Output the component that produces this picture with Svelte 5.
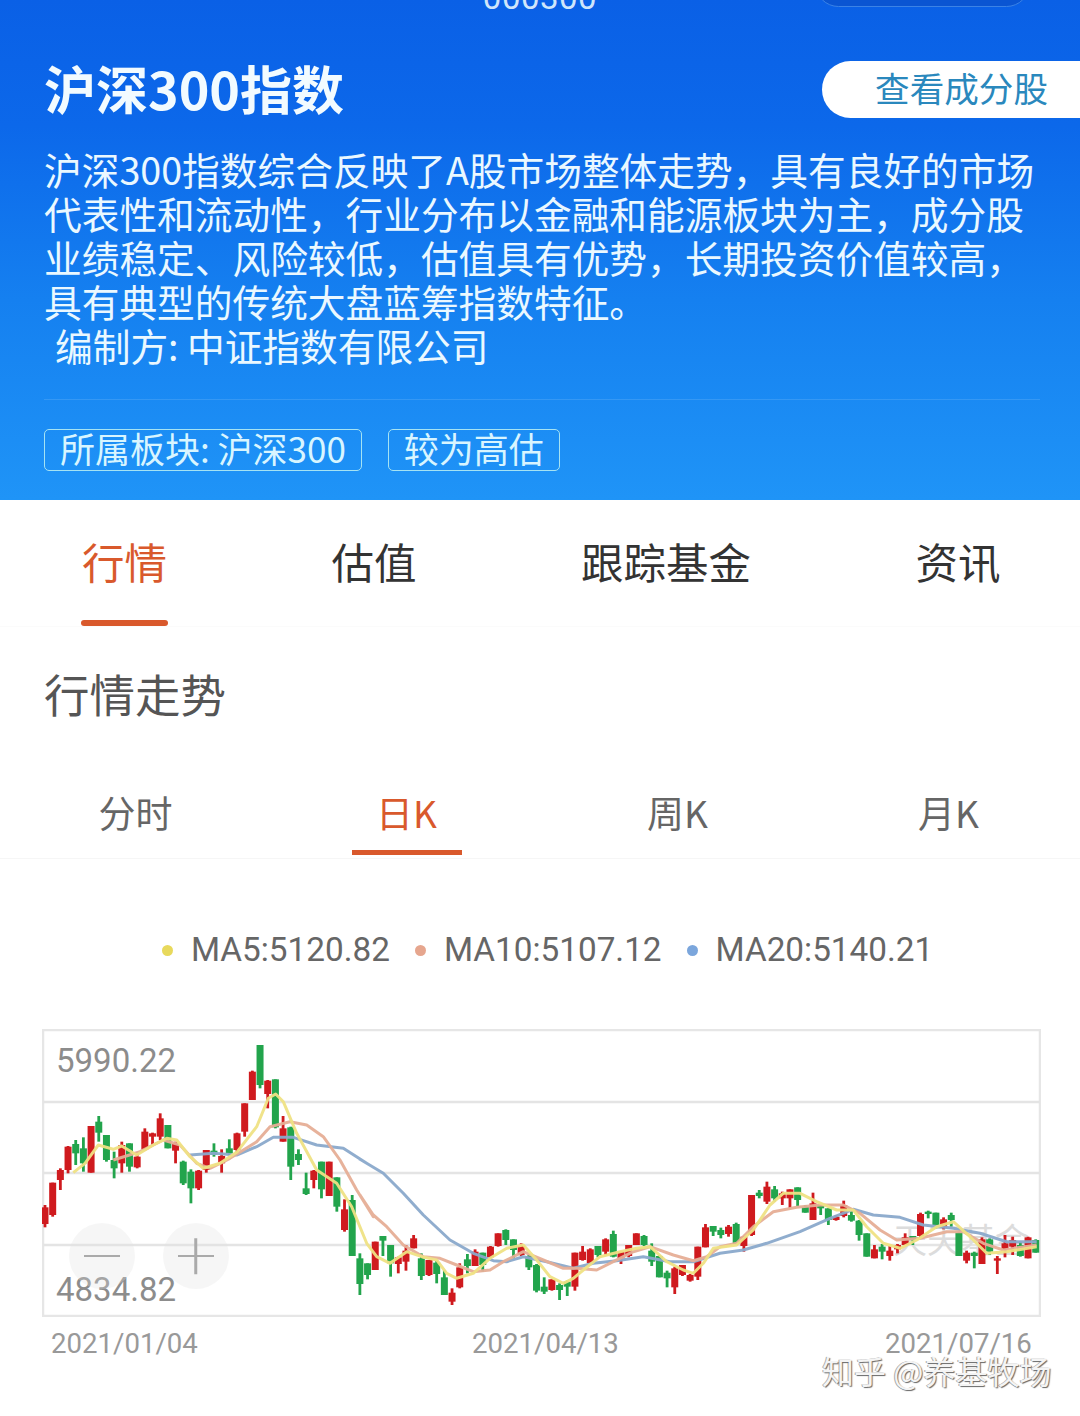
<script>
  const tabs = ['行情', '估值', '跟踪基金', '资讯'];
  const periods = ['分时', '日K', '周K', '月K'];
  const legend = [
    { color: '#e8d95c', text: 'MA5:5120.82' },
    { color: '#e6a68e', text: 'MA10:5107.12' },
    { color: '#7ba6dc', text: 'MA20:5140.21' }
  ];

  // candles: up?, wick top, body top, body bottom, wick bottom
  // values are in thirds of a pixel, measured from the base y of their group
  const first = [
    [1,555,562,612,622],[1,488,488,585,590],[1,445,450,480,510],[1,378,380,450,460],[0,360,372,400,435],
    [0,352,385,430,455],[1,318,318,458,458],[0,288,305,338,365],[0,345,345,420,425],[0,395,420,445,475],
    [1,365,375,430,458],[0,370,370,440,455],[1,398,410,442,445],[1,325,335,388,392],[1,338,340,350,375],
    [1,280,295,350,360],[0,315,315,385,385],[1,365,370,392,430],[0,422,425,490,495],[0,448,455,505,550],
    [1,450,452,505,510],[1,390,390,450,458],[0,370,392,405,410],[1,388,408,430,458],[0,358,385,400,405],
    [1,338,340,390,405],[1,250,250,335,350],[1,152,155,240,240],[0,75,75,195,205],[1,180,182,222,265],
    [0,178,178,322,325],[1,288,325,365,365],[0,320,322,440,480],[0,388,402,420,435],[0,458,505,522,525],
    [1,450,452,480,505],[0,425,425,508,535],[1,425,425,528,528],[0,472,472,560,575],[1,538,568,630,635],
    [0,525,540,708,708],[0,700,715,792,825],[0,730,730,765,778],[1,665,665,750,750]
  ];
  const second = [
    [0,318,318,332,378],[0,345,345,400,440],[1,380,382,402,430],[1,345,362,395,422],[1,315,325,355,355],
    [0,370,385,438,450],[1,390,390,435,438],[0,392,398,432,460],[0,420,442,495,495],[1,475,488,515,525],
    [1,400,412,472,475],[0,372,388,408,430],[1,358,365,408,408],[0,368,368,405,425],[1,348,350,382,385],
    [1,310,310,348,350],[0,298,300,330,345],[0,328,328,360,385],[1,340,348,375,378],[0,375,378,412,420],
    [0,402,405,482,487],[0,442,470,485,492],[1,448,448,480,482],[0,460,465,480,510],[0,452,455,470,498],
    [1,368,368,470,482],[1,348,365,390,392],[1,355,358,400,402],[0,348,348,375,382],[1,325,328,365,375],
    [0,302,312,380,382],[1,365,365,385,402],[1,345,345,378,382],[1,310,310,345,345],[0,315,318,345,348],
    [0,340,362,395,408],[0,375,378,442,442],[0,422,428,445,472],[1,410,415,472,492],[1,405,405,435,438],
    [1,432,435,452,455],[1,350,350,440,450],[1,282,292,352,352],[0,288,288,305,318],[0,293,300,315,325],
    [1,285,290,312,320],[0,278,282,342,345],[1,318,320,348,365],[1,195,195,315,318],[0,180,188,198,205],
    [1,155,170,215,222],[0,168,178,205,215],[1,185,190,205,225],[1,178,178,205,235],[0,172,172,210,228],
    [0,225,230,248,248],[1,188,220,270,270],[0,225,225,235,255],[0,235,235,270,285],[1,255,260,270,272],
    [1,212,225,258,262],[0,235,255,272,275],[0,270,272,315,332],[0,310,310,380,380],[1,345,358,385,385],
    [0,342,350,365,388],[1,348,362,378,392],[1,342,345,358,370],[1,310,322,345,345],[0,318,318,330,345],
    [1,248,252,318,322],[0,242,245,252,265],[0,248,248,285,295],[1,262,268,292,298],[0,248,255,270,290],
    [0,305,308,378,378],[1,362,368,392,400],[0,365,368,378,415],[1,322,328,402,402],[0,325,328,365,375],
    [1,378,385,392,432],[1,315,340,358,382],[1,320,330,350,375],[0,335,345,378,380],[1,320,322,385,385],
    [0,328,330,368,368]
  ];

  const scale = (rows, base) =>
    rows.map(([up, wt, bt, bb, wb]) => ({
      up,
      wt: base + wt / 3,
      bt: base + bt / 3,
      bb: base + bb / 3,
      wb: base + wb / 3
    }));
  const candles = [...scale(first, 1020), ...scale(second, 1130)].map((c, i) => ({
    ...c,
    x: 45 + i * 7.68
  }));

  // moving averages, traced in three pieces: [x origin, y origin, x,y, x,y ...] in thirds of a pixel
  const trace = (pieces) =>
    pieces
      .flatMap(([ox, oy, pts]) => pts.map(([x, y]) => `${(ox + x / 3).toFixed(1)},${(oy + y / 3).toFixed(1)}`))
      .join(' ');

  const ma5 = trace([
    [30, 1020, [[130,458],[165,430],[205,375],[250,388],[275,378],[320,405],[370,375],[410,355],[440,360],[480,410],[520,445],[570,430],[622,395],[680,320],[715,235],[737,222],[760,245],[800,340],[860,450],[920,490],[965,560],[1010,670]]],
    [360, 1130, [[50,380],[90,400],[140,365],[185,380],[230,390],[260,430],[290,445],[340,430],[390,385],[440,355],[490,345],[530,390],[570,440],[610,460],[640,445],[670,420],[720,380],[780,365],[830,355],[870,350],[920,395],[970,420],[1000,430],[1030,400],[1060,355]]],
    [720, 1130, [[50,345],[100,300],[150,225],[190,190],[240,190],[290,215],[350,240],[400,240],[440,290],[490,340],[540,355],[590,330],[650,290],[700,275],[750,320],[800,370],[860,365],[950,350]]]
  ]);
  const ma10 = trace([
    [30, 1020, [[250,420],[330,395],[400,360],[450,375],[500,430],[540,445],[600,415],[680,365],[720,320],[780,305],[830,315],[880,350],[930,420],[980,510],[1030,590]]],
    [360, 1130, [[0,195],[40,255],[80,290],[130,345],[190,380],[240,385],[290,405],[340,425],[390,420],[430,395],[490,365],[550,390],[610,415],[650,415],[710,420],[760,395],[820,365],[870,350],[940,375],[1000,392],[1040,380]]],
    [720, 1130, [[0,350],[50,340],[100,290],[160,245],[230,232],[300,225],[370,225],[420,250],[480,300],[530,330],[600,325],[680,305],[730,305],[790,340],[850,360],[950,345]]]
  ]);
  const ma20 = trace([
    [30, 1020, [[480,405],[550,400],[620,405],[680,380],[730,352],[790,352],[860,375],[940,385],[1010,430]]],
    [360, 1130, [[0,88],[70,130],[130,190],[190,255],[270,330],[340,370],[400,392],[440,395],[490,380],[560,395],[640,415],[700,400],[770,392],[850,380],[930,395],[1000,395]]],
    [720, 1130, [[0,370],[70,360],[140,340],[240,305],[330,265],[400,238],[460,255],[540,262],[610,285],[700,295],[780,310],[860,335],[950,335]]]
  ]);

  const gridY = [1102, 1173, 1245];
</script>

<div class="page">
  <header class="hero">
    <div class="top-row">
      <span class="code">000300</span>
      <span class="top-pill"></span>
    </div>
    <div class="title-row">
      <h1>沪深300指数</h1>
      <button class="members">查看成分股</button>
    </div>
    <p class="desc">沪深300指数综合反映了A股市场整体走势，具有良好的市场<br />代表性和流动性，行业分布以金融和能源板块为主，成分股<br />业绩稳定、风险较低，估值具有优势，长期投资价值较高，<br />具有典型的传统大盘蓝筹指数特征。</p>
    <p class="maker">编制方: 中证指数有限公司</p>
    <div class="tags">
      <span class="tag">所属板块: 沪深300</span>
      <span class="tag">较为高估</span>
    </div>
  </header>

  <nav class="tabs">
    {#each tabs as tab, i}
      <span class="tab" class:active={i === 0}>{tab}</span>
    {/each}
  </nav>

  <h2>行情走势</h2>

  <div class="periods">
    {#each periods as period, i}
      <span class="period" class:active={i === 1}>{period}</span>
    {/each}
  </div>

  <div class="legend">
    {#each legend as item}
      <span class="legend-item">
        <i style="background: {item.color}"></i>{item.text}
      </span>
    {/each}
  </div>

  <div class="chart">
    <svg viewBox="42 1029 999 288" width="999" height="288">
      <rect x="43" y="1030" width="997" height="286" fill="#fff" stroke="#e6e6e6" stroke-width="2.5" />
      {#each gridY as y}
        <line x1="43" x2="1040" y1={y} y2={y} stroke="#e4e4e4" stroke-width="2.5" />
      {/each}
      <text class="mark" x="893" y="1253">天天基金</text>
      {#each candles as c}
        <g fill={c.up ? '#cf1a1e' : '#22a44c'}>
          <rect x={c.x - 1.4} y={c.wt} width="2.8" height={c.wb - c.wt} />
          <rect x={c.x - 3.5} y={c.bt} width="7" height={Math.max(c.bb - c.bt, 2)} />
        </g>
      {/each}
      <polyline points={ma20} class="ma" stroke="#8aa9cb" />
      <polyline points={ma10} class="ma" stroke="#e6ae96" />
      <polyline points={ma5} class="ma" stroke="#efe284" />
    </svg>
    <span class="axis high">5990.22</span>
    <span class="axis low">4834.82</span>
    <span class="zoom minus"><b></b></span>
    <span class="zoom plus"><b></b><b></b></span>
  </div>

  <div class="dates">
    <span>2021/01/04</span>
    <span>2021/04/13</span>
    <span>2021/07/16</span>
  </div>

  <div class="watermark">知乎 @养基牧场</div>
</div>

<style>
  :global(body) {
    margin: 0;
    background: #fff;
  }

  .page {
    position: relative;
    width: 1080px;
    height: 1416px;
    overflow: hidden;
    background: #fff;
    font-family: "Noto Sans CJK SC", "Noto Sans", sans-serif;
  }

  .hero {
    height: 500px;
    box-sizing: border-box;
    overflow: hidden;
    background: linear-gradient(180deg, #0a60e6 0%, #0c68ea 25%, #1580f0 60%, #1f94f7 100%);
    color: #eaf8ff;
  }

  .top-row {
    position: relative;
    display: flow-root;
    height: 61px;
    text-align: center;
  }

  .code {
    display: block;
    margin-top: -22px;
    font-family: Roboto, sans-serif;
    font-size: 33px;
    line-height: 40px;
    letter-spacing: 0.5px;
    color: #cfe6fb;
  }

  .top-pill {
    position: absolute;
    left: 815px;
    top: -40px;
    width: 215px;
    height: 47px;
    box-sizing: border-box;
    border: 1.5px solid #3b83e6;
    border-radius: 24px;
    background: #0a55d2;
  }

  .title-row {
    display: flex;
    justify-content: space-between;
    align-items: flex-start;
    height: 57px;
    padding-left: 44px;
  }

  h1 {
    margin: 0;
    font-size: 52px;
    font-weight: 700;
    line-height: 53px;
    color: #f2fbff;
  }

  .members {
    width: 258px;
    height: 57px;
    box-sizing: border-box;
    padding: 0 32px 4px 0;
    border: none;
    border-radius: 29px 0 0 29px;
    background: #fff;
    color: #2a88bd;
    font-family: inherit;
    font-size: 34.6px;
    line-height: 53px;
    text-align: right;
  }

  .desc,
  .maker {
    margin: 0;
    font-size: 37.7px;
    line-height: 44px;
  }

  .desc {
    margin-top: 29px;
    padding-left: 44px;
    white-space: nowrap;
  }

  .maker {
    padding-left: 55px;
  }

  .tags {
    display: flex;
    gap: 26px;
    margin: 32px 40px 0 44px;
    padding-top: 29px;
    border-top: 1.5px solid rgba(255, 255, 255, 0.12);
  }

  .tag {
    height: 42px;
    box-sizing: border-box;
    padding: 0 15px;
    border: 1.5px solid #a5e3f3;
    border-radius: 5px;
    font-size: 35px;
    line-height: 36px;
    color: #d8f5ff;
    white-space: nowrap;
  }

  .tabs {
    display: flex;
    gap: 164.5px;
    height: 127px;
    box-sizing: border-box;
    padding-left: 82px;
    border-bottom: 1px solid #fbfbfb;
  }

  .tab {
    position: relative;
    font-size: 42.5px;
    line-height: 122px;
    color: #333;
  }

  .tab.active {
    color: #d9592c;
  }

  .tab.active::after {
    content: "";
    position: absolute;
    left: -1px;
    right: -1px;
    bottom: 0;
    height: 6px;
    border-radius: 3px;
    background: #d9592c;
  }

  h2 {
    margin: 0;
    padding: 36px 0 0 44px;
    font-size: 45.5px;
    font-weight: 400;
    line-height: 60px;
    color: #555;
  }

  .periods {
    display: grid;
    grid-template-columns: repeat(4, 271px);
    height: 95px;
    margin-top: 40px;
    margin-right: -4px;
    border-bottom: 1px solid #f6f6f6;
    justify-items: center;
  }

  .period {
    position: relative;
    height: 95px;
    width: 110px;
    font-size: 37px;
    line-height: 98px;
    text-align: center;
    color: #666;
  }

  .period.active {
    color: #d9592c;
  }

  .period.active::after {
    content: "";
    position: absolute;
    left: 0;
    right: 0;
    bottom: 3px;
    height: 5px;
    background: #d9592c;
  }

  .legend {
    display: flex;
    height: 44px;
    margin-top: 69px;
    padding-left: 162px;
    font-family: Roboto, sans-serif;
    font-size: 33.3px;
    line-height: 44px;
    color: #666;
  }

  .legend-item {
    display: flex;
    align-items: center;
    margin-right: 25px;
    white-space: nowrap;
  }

  .legend-item i {
    width: 11px;
    height: 11px;
    margin-right: 18px;
    border-radius: 50%;
  }

  .chart {
    position: relative;
    width: 999px;
    height: 288px;
    margin: 57px 0 0 42px;
  }

  svg {
    display: block;
  }

  .ma {
    fill: none;
    stroke-width: 3;
    stroke-linejoin: round;
    opacity: 0.95;
  }

  .mark {
    font-size: 34px;
    fill: #dcdcdc;
    font-family: "Noto Sans CJK SC", sans-serif;
  }

  .axis {
    position: absolute;
    left: 14px;
    font-family: Roboto, sans-serif;
    font-size: 33px;
    line-height: 36px;
    color: #8c8c8c;
  }

  .high {
    top: 14px;
  }

  .low {
    top: 243px;
  }

  .zoom {
    position: absolute;
    top: 194px;
    width: 66px;
    height: 66px;
    border-radius: 50%;
    background: rgba(225, 225, 225, 0.3);
    display: flex;
    align-items: center;
    justify-content: center;
  }

  .zoom b {
    position: absolute;
    width: 36px;
    height: 2.5px;
    background: #aaa;
  }

  .minus {
    left: 27px;
  }

  .plus {
    left: 121px;
  }

  .plus b:last-child {
    transform: rotate(90deg);
  }

  .dates {
    display: grid;
    grid-template-columns: 421px 413px auto;
    margin-top: 9px;
    padding-left: 51px;
    font-family: Roboto, sans-serif;
    font-size: 27.6px;
    line-height: 36px;
    color: #999;
  }

  .watermark {
    position: absolute;
    left: 822px;
    top: 1350px;
    font-size: 32px;
    line-height: 40px;
    white-space: nowrap;
    color: #f4f4f4;
    text-shadow: 1px 1px 1px #666, -1px 0 0 #aaa;
  }
</style>
